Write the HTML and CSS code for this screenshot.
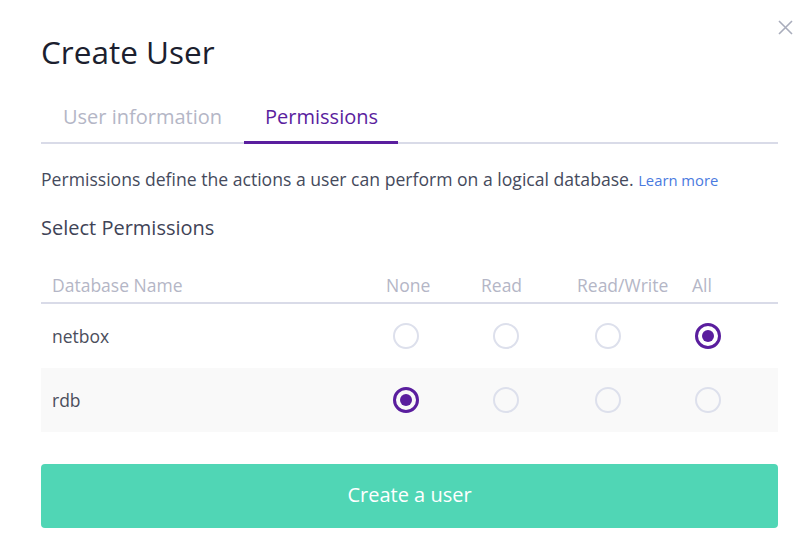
FILE: index.html
```html
<!DOCTYPE html>
<html>
<head>
<meta charset="utf-8">
<link rel="stylesheet" href="styles.css">
</head>
<body>
<div class="modal">
  <button class="close" aria-label="Close">
    <svg width="15" height="15" viewBox="0 0 15 15"><path d="M1 1L14 14M14 1L1 14" stroke="#a9adbc" stroke-width="1.6" fill="none"/></svg>
  </button>
  <h1 class="title">Create User</h1>
  <div class="tabs">
    <div class="tab">User information</div>
    <div class="tab tab-active">Permissions</div>
  </div>
  <p class="desc">Permissions define the actions a user can perform on a logical database. <a class="link" href="#">Learn more</a></p>
  <h2 class="subtitle">Select Permissions</h2>
  <div class="table">
    <div class="row row-head">
      <div class="cell cell-name">Database Name</div>
      <div class="cell">None</div>
      <div class="cell">Read</div>
      <div class="cell">Read/Write</div>
      <div class="cell">All</div>
    </div>
    <div class="row">
      <div class="cell cell-name">netbox</div>
      <div class="cell c1"><span class="radio"></span></div>
      <div class="cell c2"><span class="radio"></span></div>
      <div class="cell c3"><span class="radio"></span></div>
      <div class="cell c4"><span class="radio radio-on"></span></div>
    </div>
    <div class="row row-alt">
      <div class="cell cell-name">rdb</div>
      <div class="cell c1"><span class="radio radio-on"></span></div>
      <div class="cell c2"><span class="radio"></span></div>
      <div class="cell c3"><span class="radio"></span></div>
      <div class="cell c4"><span class="radio"></span></div>
    </div>
  </div>
  <button class="submit">Create a user</button>
</div>
</body>
</html>
```

FILE: styles.css
```css
html, body {
  margin: 0;
  padding: 0;
  background: #ffffff;
}
body {
  font-family: "Open Sans", "Noto Sans", sans-serif;
  width: 812px;
  height: 558px;
  overflow: hidden;
}
.modal {
  position: relative;
  padding: 30px 34px 0 41px;
}
.close {
  position: absolute;
  top: 20px;
  right: 19px;
  width: 15px;
  height: 15px;
  padding: 0;
  border: 0;
  background: none;
  display: flex;
}
.title {
  margin: 0;
  font-size: 31.5px;
  line-height: 44px;
  font-weight: 400;
  color: #1c1f2f;
}
.tabs {
  margin-top: 31px;
  display: flex;
  border-bottom: 2px solid #d9dbe8;
}
.tab {
  padding: 0 22px 12px 22px;
  font-size: 20px;
  line-height: 24px;
  color: #b4b6c6;
  margin-bottom: -2px;
  border-bottom: 3px solid transparent;
}
.tab-active {
  color: #5a1e9e;
  border-bottom-color: #5a1e9e;
  padding-left: 21px;
  padding-right: 20px;
}
.desc {
  margin: 23px 0 0 0;
  font-size: 17.6px;
  line-height: 24px;
  color: #454a5c;
}
.link {
  color: #4a7ae0;
  font-size: 14.8px;
  text-decoration: none;
}
.subtitle {
  margin: 23px 0 0 0;
  font-size: 20px;
  line-height: 26px;
  font-weight: 500;
  color: #3f4457;
}
.table {
  margin-top: 32px;
}
.row {
  display: grid;
  grid-template-columns: 335px 95px 96px 115px 96px;
  height: 64px;
  align-items: center;
}
.row-head {
  height: 29px;
  align-items: start;
  border-bottom: 2px solid #d9dbe8;
  color: #b4b6c6;
}
.row-alt {
  background: #f9f9f9;
}
.cell {
  padding-left: 10px;
  font-size: 17.5px;
  line-height: 24px;
  display: flex;
}
.cell-name {
  padding-left: 11px;
  color: inherit;
}
.row:not(.row-head) .cell-name {
  color: #4b4e5c;
}
.radio {
  box-sizing: border-box;
  width: 26px;
  height: 26px;
  border-radius: 50%;
  border: 2.5px solid #dde0ec;
  display: flex;
  align-items: center;
  justify-content: center;
}
.radio-on {
  border: 3px solid #5a1e9e;
}
.radio-on::after {
  content: "";
  width: 12px;
  height: 12px;
  border-radius: 50%;
  background: #5a1e9e;
}
.c1 .radio { margin-left: 7px; }
.c2 .radio { margin-left: 12px; }
.c3 .radio { margin-left: 18px; }
.c4 .radio { margin-left: 3px; }
.submit {
  margin-top: 32px;
  width: 100%;
  height: 64px;
  padding: 0 0 4px 0;
  border: 0;
  border-radius: 4px;
  background: #50d6b5;
  color: #ffffff;
  font-family: "Open Sans", "Noto Sans", sans-serif;
  font-size: 20px;
  cursor: pointer;
}
```
